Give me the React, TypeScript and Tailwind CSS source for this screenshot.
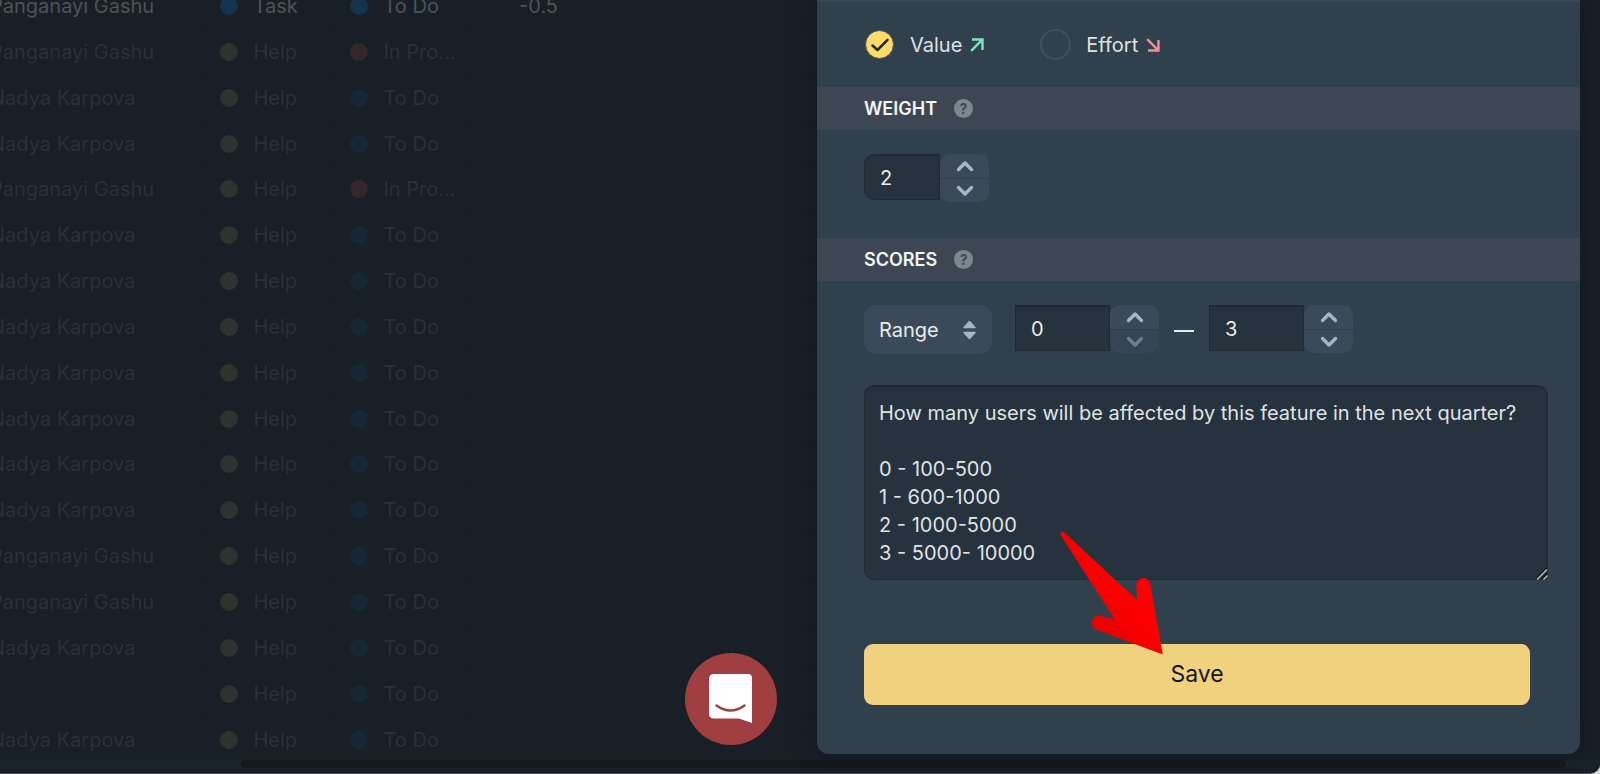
import React, { useState } from "react";

type Kind = "Task" | "Help";
type Status = "To Do" | "In Pro...";
interface Row {
  name: string;
  kind: Kind;
  status: Status;
  score?: string;
}

const P = "Panganayi Gashu";
const N = "Nadya Karpova";

const rows: Row[] = [
  { name: P, kind: "Task", status: "To Do", score: "-0.5" },
  { name: P, kind: "Help", status: "In Pro..." },
  { name: N, kind: "Help", status: "To Do" },
  { name: N, kind: "Help", status: "To Do" },
  { name: P, kind: "Help", status: "In Pro..." },
  { name: N, kind: "Help", status: "To Do" },
  { name: N, kind: "Help", status: "To Do" },
  { name: N, kind: "Help", status: "To Do" },
  { name: N, kind: "Help", status: "To Do" },
  { name: N, kind: "Help", status: "To Do" },
  { name: N, kind: "Help", status: "To Do" },
  { name: N, kind: "Help", status: "To Do" },
  { name: P, kind: "Help", status: "To Do" },
  { name: P, kind: "Help", status: "To Do" },
  { name: N, kind: "Help", status: "To Do" },
  { name: "", kind: "Help", status: "To Do" },
  { name: N, kind: "Help", status: "To Do" },
];

function Tag({ text, dot }: { text: string; dot: string }) {
  return (
    <span className="flex items-center gap-4 pl-[15px] whitespace-nowrap">
      <span className={"size-[18px] shrink-0 rounded-full " + dot} />
      {text}
    </span>
  );
}

function TaskTable() {
  return (
    <table className="-mt-4 -ml-[10px] h-[779px] w-full table-fixed border-collapse text-xl leading-6">
      <colgroup>
        <col className="w-[214px]" />
        <col className="w-[130px]" />
        <col className="w-[130px]" />
        <col className="w-[154px]" />
        <col />
      </colgroup>
      <tbody>
        {rows.map((r, i) => {
          const active = r.kind === "Task";
          const statusDot = active
            ? "bg-[#14344e]"
            : r.status === "To Do"
              ? "bg-[#162835]"
              : "bg-[#352629]";
          return (
            <tr key={i} className={active ? "text-[#4f5357]" : "text-[#2b3138]"}>
              <td className="border-r border-b border-[#161d25] p-0 whitespace-nowrap">{r.name}</td>
              <td className="border-r border-b border-[#161d25] p-0">
                <Tag text={r.kind} dot={active ? "bg-[#14344e]" : "bg-[#2e332f]"} />
              </td>
              <td className="border-r border-b border-[#161d25] p-0">
                <Tag text={r.status} dot={statusDot} />
              </td>
              <td className="border-b border-[#161d25] py-0 pr-[60px] pl-0 text-right">{r.score}</td>
              <td className="border-b border-[#161d25] p-0" />
            </tr>
          );
        })}
      </tbody>
    </table>
  );
}

function SectionTitle({ id, children }: { id: string; children: string }) {
  return (
    <div className="flex h-[43px] items-center gap-[17px] bg-[#3d4753] pl-[47px]">
      <h2 id={id} className="text-lg leading-6 font-semibold text-[#f4f5f6]">
        {children}
      </h2>
      <button
        type="button"
        aria-label="Help"
        className="flex size-[19px] items-center justify-center rounded-full bg-[#7c8891] text-sm leading-none font-bold text-[#3d4753]"
      >
        ?
      </button>
    </div>
  );
}

function Chevron({ down }: { down?: boolean }) {
  return (
    <svg width="18" height="12" viewBox="0 0 18 12" fill="none" stroke="currentColor" strokeWidth="3.400" strokeLinecap="round" strokeLinejoin="round">
      <path d={down ? "M2.500 2.500 9 9 15.500 2.500" : "M2.500 9.500 9 3 15.500 9.500"} />
    </svg>
  );
}

function Stepper({
  label,
  value,
  onChange,
  field,
}: {
  label: string;
  value: number;
  onChange: (v: number) => void;
  field: string;
}) {
  const atMin = value <= 0;
  return (
    <div className="flex items-start">
      <input
        type="text"
        inputMode="numeric"
        aria-label={label}
        value={value}
        onChange={(e) => onChange(Number(e.target.value) || 0)}
        className={
          "h-[46px] border border-[#1f2a32] bg-[#26323d] pt-0.5 pl-[15px] text-xl leading-6 text-[#e9ecee] shadow-[inset_0_1px_1px_#1f2a32] outline-none " +
          field
        }
      />
      <div className="flex w-[49px] flex-col gap-px">
        <button
          type="button"
          aria-label={"Increase " + label}
          onClick={() => onChange(value + 1)}
          className="flex h-6 items-center justify-center rounded-t-[10px] bg-[#3a4a59] text-[#a5b6c4]"
        >
          <Chevron />
        </button>
        <button
          type="button"
          aria-label={"Decrease " + label}
          disabled={atMin}
          onClick={() => onChange(value - 1)}
          className={
            "flex h-[23px] items-center justify-center rounded-b-[10px] " +
            (atMin ? "bg-[#354553] text-[#6f7f8c]" : "bg-[#3a4a59] text-[#a5b6c4]")
          }
        >
          <Chevron down />
        </button>
      </div>
    </div>
  );
}

function Choice({
  label,
  checked,
  onSelect,
  children,
}: {
  label: string;
  checked: boolean;
  onSelect: () => void;
  children: React.ReactNode;
}) {
  return (
    <label className="flex items-center gap-[15px]">
      <span className="grid size-[31px] place-items-center">
        <input
          type="radio"
          name="kind"
          checked={checked}
          onChange={onSelect}
          className="col-start-1 row-start-1 size-[31px] appearance-none rounded-full border-2 border-[#40505d] checked:size-[29px] checked:border checked:border-[#4a4a5c] checked:bg-[#ffdc66]"
        />
        {checked && (
          <svg className="pointer-events-none col-start-1 row-start-1" width="18" height="14" viewBox="0 0 18 14" fill="none" stroke="#1d2b36" strokeWidth="2.500" strokeLinecap="round" strokeLinejoin="round">
            <path d="M1.500 7.500 6.500 12 16.500 1.800" />
          </svg>
        )}
      </span>
      <span className="flex items-center gap-2 text-xl leading-6 text-[#dfe3e6]">
        {label}
        {children}
      </span>
    </label>
  );
}

function ScorePanel() {
  const [kind, setKind] = useState("value");
  const [weight, setWeight] = useState(2);
  const [min, setMin] = useState(0);
  const [max, setMax] = useState(3);

  return (
    <form
      onSubmit={(e) => e.preventDefault()}
      className="flex w-[763px] flex-col rounded-b-xl border-t-2 border-[#3d4753] bg-[#30404d] shadow-[0_0_24px_#12181f]"
    >
      <div role="radiogroup" aria-label="Criterion type" className="flex h-[85px] items-center gap-[56px] pl-[47px]">
        <Choice label="Value" checked={kind === "value"} onSelect={() => setKind("value")}>
          <svg width="14" height="14" viewBox="0 0 14 14" fill="none" stroke="#7de3c3" strokeWidth="2.400">
            <path d="M2 1.500H12.500V12M12.300 1.700 1.200 12.800" />
          </svg>
        </Choice>
        <Choice label="Effort" checked={kind === "effort"} onSelect={() => setKind("effort")}>
          <svg width="14" height="14" viewBox="0 0 14 14" fill="none" stroke="#f58f8f" strokeWidth="2.400">
            <path d="M2 12.500H12.500V2M12.300 12.300 1.200 1.200" />
          </svg>
        </Choice>
      </div>

      <SectionTitle id="weight">WEIGHT</SectionTitle>
      <div className="px-[47px] pt-6 pb-9">
        <Stepper label="weight" value={weight} onChange={setWeight} field="w-[76px] rounded-l-[10px]" />
      </div>

      <SectionTitle id="scores">SCORES</SectionTitle>
      <div className="flex flex-col pt-6 pr-8 pb-[49px] pl-[47px]">
        <div className="flex items-start">
          <div className="mr-[23px] grid w-32 items-center">
            <select
              aria-labelledby="scores"
              defaultValue="Range"
              className="col-start-1 row-start-1 h-[49px] w-full appearance-none rounded-xl bg-[#3a4a59] pl-[15px] text-xl leading-6 text-[#e9ecee] outline-none"
            >
              <option>Range</option>
              <option>List</option>
            </select>
            <svg className="pointer-events-none col-start-1 row-start-1 mr-4 justify-self-end" width="13" height="20" viewBox="0 0 13 20" fill="#a5b6c4" stroke="#a5b6c4" strokeWidth="1.500" strokeLinejoin="round">
              <path d="M6.500 1.500 12 7.500H1ZM6.500 18.500 12 12.500H1Z" />
            </svg>
          </div>
          <Stepper label="minimum" value={min} onChange={setMin} field="w-[95px]" />
          <span className="mx-[15px] mt-[25px] h-0.5 w-5 bg-[#e9ecee]" />
          <Stepper label="maximum" value={max} onChange={setMax} field="w-[95px]" />
        </div>
        <div className="relative mt-[31px] flex">
          <textarea
            aria-label="Score description"
            defaultValue={
              "How many users will be affected by this feature in the next quarter?\n\n0 - 100-500\n1 - 600-1000\n2 - 1000-5000\n3 - 5000- 10000"
            }
            className="h-[195px] w-full rounded-[10px] border border-[#1f2a32] bg-[#26323d] px-[14px] py-[13px] text-xl leading-7 text-[#dfe3e6] shadow-[inset_0_1px_1px_#1f2a32] outline-none [&::-webkit-resizer]:appearance-none"
          />
          <svg className="pointer-events-none absolute right-0 bottom-0" width="12" height="12" viewBox="0 0 12 12">
            <path d="M2 12 12 2V12Z" fill="#26323d" />
            <path d="M0 10.500 10.500 0M5.500 11 11.500 5" stroke="#10161c" strokeWidth="1.500" />
            <path d="M1 11.500 11 1.500M7.500 11.500 11.500 7.500" stroke="#b4b9bd" strokeWidth="1.500" />
          </svg>
        </div>
        <div className="pt-16 pr-[18px]">
          <button type="submit" className="h-[61px] w-full rounded-[9px] bg-[#f0d17e] pb-0.5 text-[23px] leading-7 text-[#14171a]">
            Save
          </button>
        </div>
      </div>
    </form>
  );
}

function ChatButton() {
  return (
    <button type="button" aria-label="Open chat" className="mb-[9px] flex size-[92px] items-center justify-center rounded-full bg-[#a03e42]">
      <svg width="44" height="50" viewBox="0 0 44 50">
        <path d="M5 0H39Q43 0 43 4V49L30 44.500H5Q0 44.500 0 39.500V5Q0 0 5 0Z" fill="#fff" />
        <path d="M7.500 31.500Q21.500 41.500 35.500 31.500" fill="none" stroke="#a03e42" strokeWidth="2.400" strokeLinecap="round" />
      </svg>
    </button>
  );
}

export default function App() {
  return (
    <div className="min-h-screen bg-[#d9dadb] font-['Inter',sans-serif]">
      <div className="relative flex h-screen flex-col overflow-hidden rounded-br-[10px] border-b border-[#4a4f56] bg-[#181f27]">
        <main className="min-h-0 flex-1 overflow-hidden">
          <TaskTable />
        </main>
        <div className="mb-[5px] h-2 bg-[#1a232d] pr-[35px] pl-[241px]">
          <div className="h-full rounded-full bg-[#14191e]" />
        </div>

        <div className="absolute inset-x-0 top-0 flex items-end justify-end gap-10 pr-5">
          <ChatButton />
          <ScorePanel />
        </div>

        <svg className="pointer-events-none absolute top-[530px] left-[1058px]" width="108" height="126" viewBox="0 0 108 126">
          <defs>
            <linearGradient id="pointer" x1="0.350" y1="0.800" x2="0.650" y2="0.500">
              <stop offset="0" stopColor="#e80000" />
              <stop offset="1" stopColor="#ff0000" />
            </linearGradient>
          </defs>
          <path
            d="M2.200 4.500Q4 -0.500 7.500 3.500L79 70 78.300 55.500A7 7 0 0 1 92.200 54L104.800 124.500 38 99.500A7.200 7.200 0 0 1 42 85.800L56.500 89Z"
            fill="url(#pointer)"
          />
        </svg>
      </div>
    </div>
  );
}
